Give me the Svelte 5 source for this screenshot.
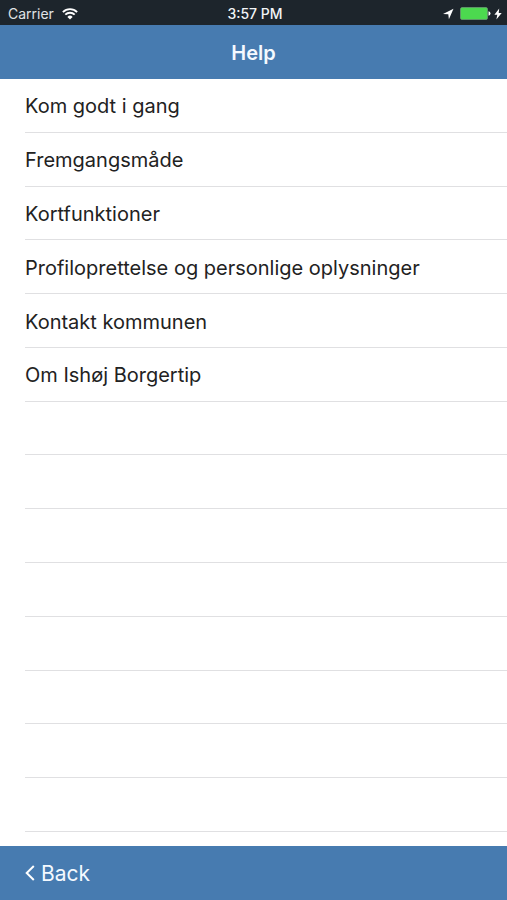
<script lang="ts">
	const topics = [
		'Kom godt i gang',
		'Fremgangsmåde',
		'Kortfunktioner',
		'Profiloprettelse og personlige oplysninger',
		'Kontakt kommunen',
		'Om Ishøj Borgertip'
	];
	const rowCount = 14;
	const emptyRows = Array(rowCount - topics.length).fill(null);

	let selected = $state('');
</script>

<div class="screen">
	<div class="status-bar">
		<div class="carrier">
			<span>Carrier</span>
			<svg width="16" height="12" viewBox="0 0 16 12" aria-hidden="true">
				<path d="M.9 4.1a10 10 0 0 1 14.2 0M3.3 6.7a6.6 6.6 0 0 1 9.4 0" fill="none" stroke="#fff" stroke-width="1.9" />
				<path d="M5.4 8.9a3.7 3.7 0 0 1 5.2 0L8 11.5z" fill="#fff" />
			</svg>
		</div>
		<span class="clock">3:57 PM</span>
		<div class="power">
			<svg width="12" height="12" viewBox="0 0 12 12" aria-hidden="true">
				<path d="M11.5.8 6.9 11.2 6.3 6.2 1 6z" fill="#fff" />
			</svg>
			<svg class="battery" width="31" height="13" viewBox="0 0 31 13" aria-hidden="true">
				<rect x=".5" y=".5" width="27" height="12" rx="1.5" fill="#4cd94f" stroke="#78a583" stroke-width=".6" />
				<path d="M28.5 4.3q2 .4 2 2.2t-2 2.2z" fill="#fff" />
			</svg>
			<svg width="8" height="12" viewBox="0 0 8 12" aria-hidden="true">
				<path d="M5.2 .5.4 6.8h2.9L2.4 11.6 7.7 4.9h-3z" fill="#fff" />
			</svg>
		</div>
	</div>

	<header>
		<h1>Help</h1>
	</header>

	<main>
		<ul>
			{#each topics as topic}
				<li>
					<button onclick={() => (selected = topic)} aria-pressed={selected === topic}>{topic}</button>
				</li>
			{/each}
			{#each emptyRows as _}
				<li aria-hidden="true"></li>
			{/each}
		</ul>
	</main>

	<footer>
		<button class="back">
			<svg width="10" height="16" viewBox="0 0 10 16" aria-hidden="true">
				<path d="M8.8 1 1.7 8l7.1 7" fill="none" stroke="#fff" stroke-width="2" />
			</svg>
			<span>Back</span>
		</button>
	</footer>
</div>

<style>
:global(body) {
	margin: 0;
}

.screen {
	display: flex;
	flex-direction: column;
	min-height: 100vh;
	background: #fff;
	color: #222;
	font-family: Inter, "Liberation Sans", sans-serif;
}

.status-bar {
	display: grid;
	grid-template-columns: 1fr auto 1fr;
	align-items: center;
	height: 25px;
	padding: 2px 5px 0 8px;
	box-sizing: border-box;
	background: #1d252c;
	color: #f2f4f6;
	font-size: 14px;
}
.carrier {
	display: flex;
	align-items: center;
	gap: 8px;
	color: #e0e3e6;
}
.clock {
	font-weight: 500;
}
.power {
	display: flex;
	align-items: center;
	justify-content: flex-end;
	gap: 3px;
}
.battery {
	margin-left: 3px;
}

header {
	display: flex;
	align-items: center;
	justify-content: center;
	height: 54px;
	padding-top: 2px;
	box-sizing: border-box;
	background: #477bb0;
}
h1 {
	margin: 0;
	color: #f4f9ff;
	font-size: 20px;
	font-weight: 600;
}

main {
	display: flex;
	flex: 1;
	padding: 0 0 14px 25px;
}
ul {
	display: flex;
	flex: 1;
	flex-direction: column;
	margin: 0;
	padding: 0;
	list-style: none;
}
li {
	display: flex;
	flex: 1;
	border-bottom: 1px solid #e0e0e2;
}
li button {
	flex: 1;
	padding: 2px 0 0;
	border: none;
	background: none;
	color: inherit;
	font: inherit;
	font-size: 20px;
	text-align: left;
	cursor: pointer;
}

footer {
	display: flex;
	height: 54px;
	background: #477bb0;
}
.back {
	display: flex;
	align-items: center;
	gap: 6px;
	padding: 0 25px;
	border: none;
	background: none;
	color: #f4f9ff;
	font: inherit;
	font-size: 21px;
	cursor: pointer;
}
</style>
